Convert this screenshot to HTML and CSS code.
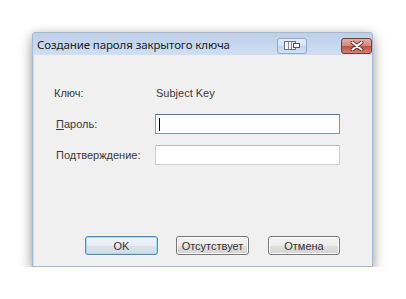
FILE: index.html
```html
<!DOCTYPE html>
<html lang="ru">
<head>
    <meta charset="UTF-8">
    <meta name="viewport" content="width=device-width, initial-scale=1.0">
    <title>Создание пароля закрытого ключа</title>
    <link rel="stylesheet" href="styles.css">
</head>
<body>
    <div class="desk">
        <div class="window">
            <div class="titlebar">
                <span class="title">Создание пароля закрытого ключа</span>
                <span class="cap-btn cap-switch">
                    <svg width="16" height="9" viewBox="0 0 16 9">
                        <rect x="0.5" y="0.5" width="11" height="8" fill="#f4f6f8" stroke="#6b7480"/>
                        <line x1="4.5" y1="1" x2="4.5" y2="8" stroke="#8a929c"/>
                        <line x1="7.5" y1="1" x2="7.5" y2="8" stroke="#8a929c"/>
                        <rect x="9.5" y="2.5" width="6" height="4" fill="#ffffff" stroke="#4e5660"/>
                    </svg>
                </span>
                <span class="cap-btn cap-close">
                    <svg width="14" height="10" viewBox="0 0 14 10">
                        <path d="M2.5 1.5 L11.5 8.5 M11.5 1.5 L2.5 8.5" stroke="#6a302a" stroke-width="4" stroke-linecap="round"/>
                        <path d="M2.5 1.5 L11.5 8.5 M11.5 1.5 L2.5 8.5" stroke="#f8f8f8" stroke-width="2.2" stroke-linecap="round"/>
                    </svg>
                </span>
            </div>
            <div class="client">
                <div class="form">
                    <span class="label">Ключ:</span>
                    <span class="value">Subject Key</span>
                    <label class="label label-in"><u>П</u>ароль:</label>
                    <div class="field focused"><span class="caret"></span></div>
                    <label class="label label-in">По<u>д</u>тверждение:</label>
                    <div class="field"></div>
                </div>
                <div class="buttons">
                    <span class="btn btn-default">OK</span>
                    <span class="btn">Отсутствует</span>
                    <span class="btn">Отмена</span>
                </div>
            </div>
        </div>
    </div>
</body>
</html>
```

FILE: styles.css
```css
body {
    margin: 0;
    background-color: #ffffff;
    font-family: 'Liberation Sans', Arial, sans-serif;
}
.desk {
    padding: 32px 0 0 32px;
}
.window {
    width: 341px;
    height: 235px;
    box-sizing: border-box;
    display: flex;
    flex-direction: column;
    background: #c9daee;
    border: 1px solid #a3b9d4;
    border-radius: 3px 3px 0 0;
    box-shadow: 0 6px 14px rgba(0, 0, 0, 0.35), 0 0 8px rgba(0, 0, 0, 0.12);
}
.titlebar {
    height: 22px;
    display: flex;
    align-items: center;
    padding: 0 0 0 4px;
    background: linear-gradient(#bccfe7, #c8d9ee 60%, #d0dff1);
}
.title {
    flex: 1;
    font-family: 'Noto Sans', sans-serif;
    font-size: 11.5px;
    color: #1c1c1c;
    letter-spacing: -0.1px;
    margin-top: 1px;
}
.cap-btn {
    height: 16px;
    box-sizing: border-box;
    display: flex;
    align-items: center;
    justify-content: center;
    border-radius: 3px;
    margin-top: 3px;
}
.cap-switch {
    width: 30px;
    margin-right: 34px;
    border: 1px solid #8ea8c8;
    background: linear-gradient(#e6eef8, #d2e0f1 50%, #c2d4ea 51%, #d3e2f3);
}
.cap-close {
    width: 31px;
    border: 1px solid #7a3a33;
    background: linear-gradient(#e3aca3, #d4867a 50%, #c2503f 51%, #d3806f);
}
.client {
    flex: 1;
    display: flex;
    flex-direction: column;
    background: #f0f0f0;
    margin: 0 0 0 1px;
}
.form {
    display: grid;
    grid-template-columns: 101px 185px;
    grid-template-rows: 20px 20px 20px;
    row-gap: 11px;
    align-items: center;
    padding: 28px 0 0 20px;
    font-size: 11px;
    color: #3a3a3a;
}
.label-in {
    padding-left: 2px;
}
.value {
    padding-left: 1px;
}
.field {
    height: 20px;
    box-sizing: border-box;
    background: #ffffff;
    border: 1px solid #ccd0d5;
    border-top-color: #b8bcc2;
    display: flex;
    align-items: center;
}
.field.focused {
    border-color: #7b98b8;
    border-top-color: #55769c;
}
.caret {
    width: 1px;
    height: 13px;
    margin-left: 3px;
    background: #000000;
}
.buttons {
    display: flex;
    gap: 18px;
    margin-top: auto;
    padding: 0 0 11px 51px;
}
.btn {
    width: 73px;
    height: 19px;
    box-sizing: border-box;
    display: flex;
    align-items: center;
    justify-content: center;
    font-size: 11px;
    color: #333333;
    border: 1px solid #777777;
    border-radius: 3px;
    background: linear-gradient(#f4f4f4, #ececec 50%, #e0e0e0 51%, #d4d4d4);
    box-shadow: inset 0 0 0 1px #fcfcfc;
}
.btn-default {
    border-color: #4a8cbc;
    background: linear-gradient(#eef4f8, #e6edf2 50%, #d9e3ea 51%, #d0dde6);
    box-shadow: inset 0 0 0 1px #a9d8f2;
}
.btn:last-child {
    width: 72px;
    margin-left: 1px;
}
```
